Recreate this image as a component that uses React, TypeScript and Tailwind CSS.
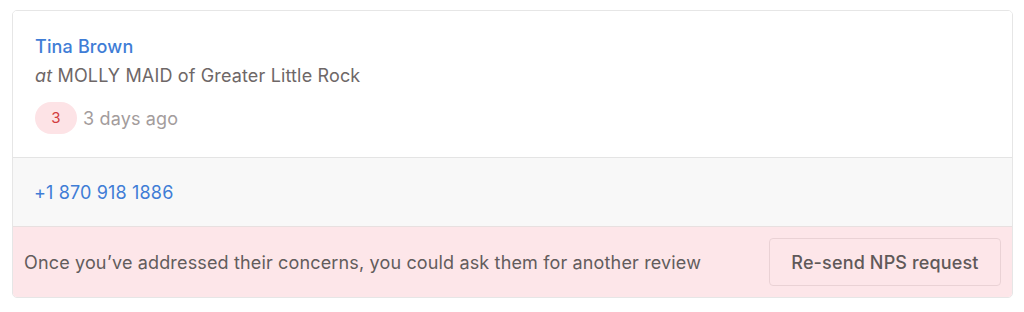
import React from "react";

export default function App() {
  return (
    <div className="w-[1024px] h-[312px] bg-white pt-[10px] pl-[12px] pr-[11px] tracking-[0.15px]" style={{ fontFamily: "Inter, 'Noto Sans', sans-serif" }}>
      <div className="border border-[#e6e6e6] rounded-[5px] overflow-hidden">
        <div className="bg-white pt-[22px] pb-[23px] px-[22px] border-b border-[#e4e4e4]">
          <div className="text-[18px] leading-[27px] font-medium text-[#3f7dd6]">Tina Brown</div>
          <div className="mt-[2px] text-[18px] leading-[27px] text-[#6e6767]">
            <span className="italic">at</span> MOLLY MAID of Greater Little Rock
          </div>
          <div className="mt-[13px] flex items-center gap-[6px]">
            <span className="inline-flex items-center justify-center w-[42px] h-[32px] rounded-full bg-[#fde3e6] text-[#d23c40] text-[15px]">3</span>
            <span className="text-[18px] text-[#a39c9c]">3 days ago</span>
          </div>
        </div>
        <div className="bg-[#f8f8f8] pt-[21px] pb-[20px] px-[21px] border-b border-[#e8e0e0]">
          <div className="text-[18px] leading-[27px] text-[#3f7dd6]">+1 870 918 1886</div>
        </div>
        <div className="bg-[#fde6e9] py-[11px] px-[11px] flex items-center justify-between">
          <div className="text-[18px] text-[#625c5c]">Once you’ve addressed their concerns, you could ask them for another review</div>
          <button className="w-[232px] h-[48px] rounded-[4px] border border-[#ead2d5] text-[18px] text-[#5f5959] font-medium">Re-send NPS request</button>
        </div>
      </div>
    </div>
  );
}
